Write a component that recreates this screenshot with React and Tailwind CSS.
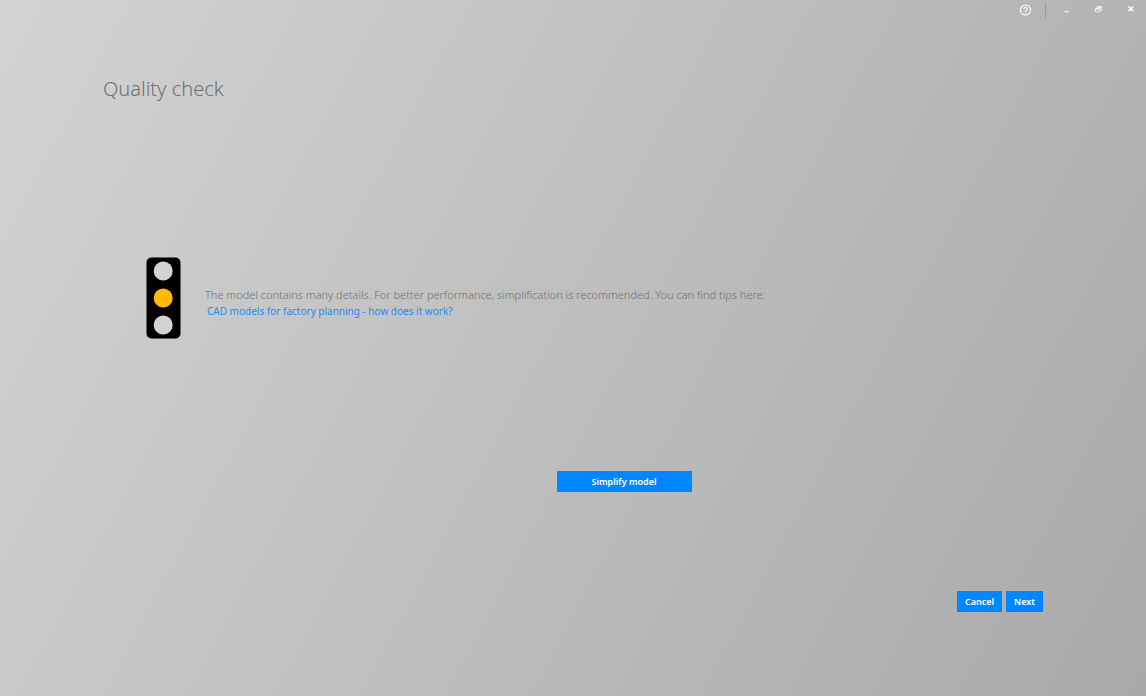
import React from "react";

const windowButton = "flex h-5 w-8 items-center justify-center text-white";
const actionButton =
  "h-[21px] bg-[#0087ff] text-[9px] leading-5 font-semibold text-white hover:bg-[#0078e6]";

function TitleBar() {
  return (
    <header className="flex h-5 items-center justify-end">
      <button type="button" aria-label="Help" className={windowButton}>
        <svg width="12" height="12" viewBox="0 0 12 12" fill="none" stroke="currentColor" strokeWidth="1.1">
          <circle cx="6.5" cy="6" r="5" />
          <path d="M4.9 4.9a1.6 1.6 0 1 1 2.5 1.3c-.6.4-.9.6-.9 1.2" />
          <path d="M6.5 8.1v1" />
        </svg>
      </button>
      <span className="ml-1 h-4 w-px bg-[#999999]" />
      <button type="button" aria-label="Minimize" className={`${windowButton} ml-1`}>
        <svg width="8" height="8" viewBox="0 0 8 8">
          <path d="M2.5 5h4.5v1.2h-4.5z" fill="currentColor" fillOpacity="0.85" />
        </svg>
      </button>
      <button type="button" aria-label="Restore" className={windowButton}>
        <svg width="8" height="8" viewBox="0 0 8 8" fill="none" stroke="currentColor" strokeWidth="0.8">
          <path d="M1.5 2.7h4.3v3.2H1.5zM3.2 2.5V.8h4.4V4.2H6" />
          <path d="M3.2 1.1h4.4M1.5 3h4.3" />
        </svg>
      </button>
      <button type="button" aria-label="Close" className={windowButton}>
        <svg width="8" height="8" viewBox="0 0 8 8" stroke="currentColor" strokeWidth="1.6">
          <path d="M2.5 .5l4.8 4.8M7.3 .5L2.5 5.3" />
        </svg>
      </button>
    </header>
  );
}

function TrafficLight() {
  return (
    <svg width="35" height="82" viewBox="0 0 35 82" role="img" aria-label="Yellow light" className="shrink-0">
      <rect x="0.5" y="0.5" width="34" height="81" rx="5" fill="#000000" />
      <circle cx="17.2" cy="14" r="9.5" fill="#d3d3d3" />
      <circle cx="17.2" cy="41" r="9.5" fill="#ffb900" />
      <circle cx="17.2" cy="68" r="9.5" fill="#d3d3d3" />
    </svg>
  );
}

export default function App() {
  return (
    <div className="flex min-h-screen flex-col bg-[linear-gradient(118deg,#d3d3d3,#a9a9a9)] font-['Noto_Sans','Open_Sans',sans-serif]">
      <TitleBar />
      <main className="flex grow flex-col px-[103px] pt-[53px] pb-[84px]">
        <h1 className="text-[20px] leading-8 font-light text-[#707070]">Quality check</h1>
        <section className="mt-[152px] ml-[43px] flex items-center gap-6">
          <TrafficLight />
          <div className="mt-2.5 text-[10px] leading-[17px]">
            <p className="text-[11px] font-light text-[#707070]">
              The model contains many details. For better performance, simplification is recommended. You can find tips here:
            </p>
            <a href="#tips" className="ml-0.5 block text-[#1e88ff]">
              CAD models for factory planning - how does it work?
            </a>
          </div>
        </section>
        <div className="mt-[132px] flex justify-center pl-[102px]">
          <button type="button" className={`${actionButton} w-[135px]`}>
            Simplify model
          </button>
        </div>
        <footer className="mt-auto flex justify-end gap-1">
          <button type="button" className={`${actionButton} w-[45px]`}>
            Cancel
          </button>
          <button type="button" className={`${actionButton} w-[37px]`}>
            Next
          </button>
        </footer>
      </main>
    </div>
  );
}
